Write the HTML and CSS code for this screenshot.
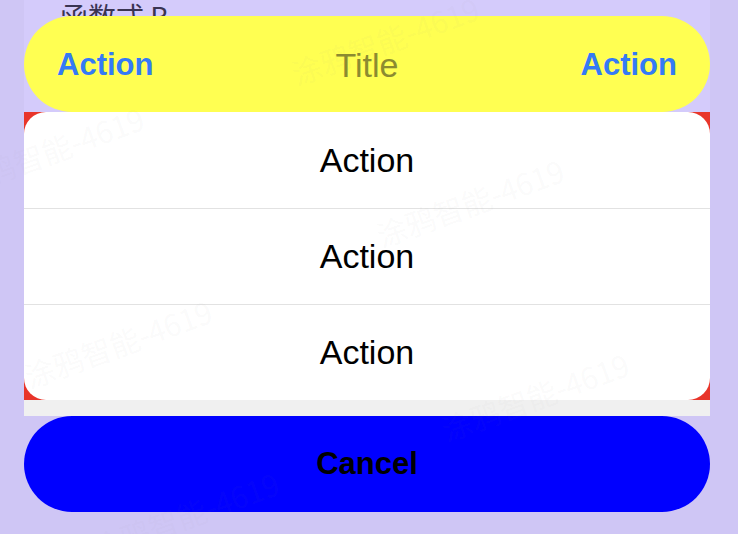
FILE: index.html
```html
<!DOCTYPE html>
<html lang="zh-CN">
<head>
  <meta charset="UTF-8" />
  <title>ActionSheet</title>
  <link rel="stylesheet" href="styles.css">
</head>
<body>
  <div class="page">
    <div class="sheet">
      <div class="top">
        <div class="peek">函数式 B</div>
        <div class="header">
          <span class="header-action">Action</span>
          <span class="header-title">Title</span>
          <span class="header-action">Action</span>
        </div>
      </div>

      <div class="card">
        <div class="list">
          <div class="row">Action</div>
          <div class="row">Action</div>
          <div class="row">Action</div>
        </div>
      </div>

      <div class="cancel">Cancel</div>
    </div>

    <div class="watermarks">
      <span class="mark mark-1">涂鸦智能-4619</span>
      <span class="mark mark-2">涂鸦智能-4619</span>
      <span class="mark mark-3">涂鸦智能-4619</span>
      <span class="mark mark-4">涂鸦智能-4619</span>
      <span class="mark mark-5">涂鸦智能-4619</span>
      <span class="mark mark-6">涂鸦智能-4619</span>
    </div>
  </div>
</body>
</html>
```

FILE: styles.css
```css
body {
  margin: 0;
  padding: 0;
  background: #cfc6f5;
  font-family: "Liberation Sans", Arial, "Noto Sans CJK SC", sans-serif;
  overflow: hidden;
}
.page {
  position: relative;
  width: 738px;
  height: 534px;
  overflow: hidden;
}
.sheet {
  margin-left: 24px;
  width: 686px;
  display: flex;
  flex-direction: column;
}
.top {
  background: #d4cbfb;
}
.peek {
  height: 16px;
  overflow: hidden;
  padding-left: 36px;
  padding-top: 2px;
  box-sizing: border-box;
  font-family: "Noto Sans CJK SC", sans-serif;
  font-size: 28px;
  line-height: 28px;
  color: #3a3452;
}
.header {
  height: 96px;
  background: #ffff52;
  border-radius: 48px;
  padding: 2px 33px 0 33px;
  box-sizing: border-box;
  display: flex;
  align-items: center;
  justify-content: space-between;
}
.header-action {
  font-size: 31px;
  font-weight: bold;
  color: #347af6;
}
.header-title {
  font-size: 34px;
  color: #8c8b30;
}
.card {
  background: #f0f0f0;
  padding-bottom: 16px;
}
.list {
  background: #e8352a;
}
.row {
  height: 96px;
  box-sizing: border-box;
  background: #fff;
  display: flex;
  align-items: center;
  justify-content: center;
  font-size: 34px;
  color: #000;
}
.row + .row {
  border-top: 1px solid #e2e2e2;
}
.row:first-child {
  border-radius: 22px 22px 0 0;
}
.row:last-child {
  border-radius: 0 0 22px 22px;
}
.cancel {
  height: 96px;
  background: #0000ff;
  border-radius: 48px;
  display: flex;
  align-items: center;
  justify-content: center;
  font-size: 31px;
  font-weight: bold;
  color: #000;
}
.watermarks {
  position: absolute;
  inset: 0;
  pointer-events: none;
}
.mark {
  position: absolute;
  width: 210px;
  text-align: center;
  font-family: "Noto Sans CJK SC", sans-serif;
  font-size: 30px;
  line-height: 30px;
  white-space: nowrap;
  color: rgba(150, 150, 150, 0.05);
  transform: rotate(-20deg);
}
.mark-1 { left: 280px; top: 25px; }
.mark-2 { left: -55px; top: 135px; }
.mark-3 { left: 365px; top: 187px; }
.mark-4 { left: 13px; top: 328px; }
.mark-5 { left: 430px; top: 381px; }
.mark-6 { left: 80px; top: 500px; }
```
